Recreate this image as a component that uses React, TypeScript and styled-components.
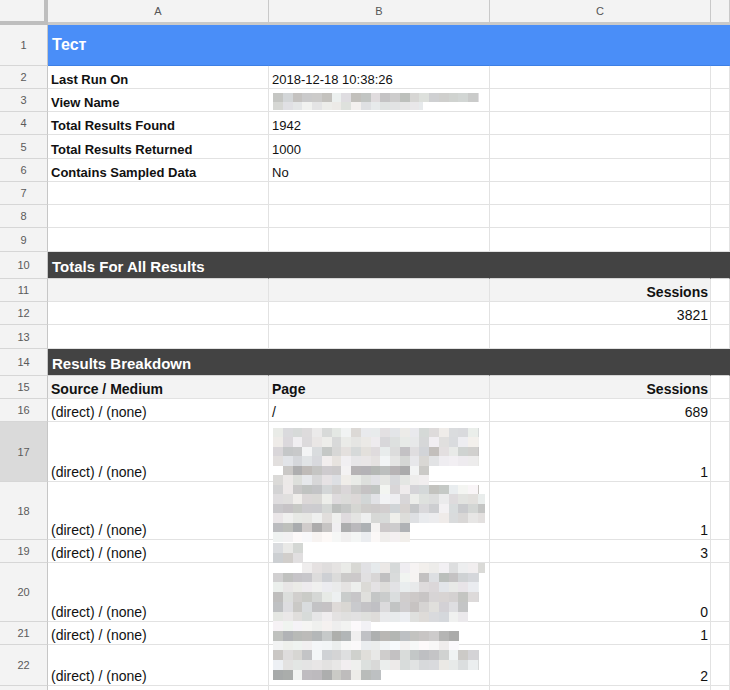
import React from 'react';
import styled, { createGlobalStyle, css } from 'styled-components';

const GlobalStyle = createGlobalStyle`
  html, body {
    margin: 0;
    padding: 0;
    background: #ffffff;
    overflow: hidden;
  }
  body {
    font-family: Arial, "Liberation Sans", sans-serif;
  }
`;

type Kind = 'plain' | 'title' | 'section' | 'thead';
type Tone = 'vlight' | 'light' | 'mid' | 'dark';
type Band = [number, number, Tone];

interface MosaicSpec {
  top: number;
  bandH: number;
  seed: number;
  bands: Band[];
}

interface CellSpec {
  text?: string;
  right?: boolean;
  bold?: boolean;
  size?: number;
  mosaic?: MosaicSpec;
}

interface RowSpec {
  n: number;
  label?: boolean;
  h: number;
  kind: Kind;
  active?: boolean;
  cells: CellSpec[];
}

const COL_W = 221;

const Sheet = styled.div`
  width: 730px;
  overflow: hidden;
  display: flex;
  flex-direction: column;
`;

const Row = styled.div<{ $h: number }>`
  display: flex;
  height: ${(p) => p.$h}px;
`;

const Corner = styled.div`
  flex: 0 0 48px;
  box-sizing: border-box;
  background: #f3f3f3;
  border-right: 4px solid #bebebe;
  border-bottom: 4px solid #bebebe;
`;

const ColHead = styled.div<{ $fill?: boolean }>`
  flex: ${(p) => (p.$fill ? '1 0 auto' : `0 0 ${COL_W}px`)};
  box-sizing: border-box;
  background: #f3f3f3;
  border-right: 1px solid #c9c9c9;
  border-bottom: 3px solid #c9c9c9;
  display: flex;
  align-items: center;
  justify-content: center;
  padding-bottom: 1px;
  font-size: 11px;
  color: #555555;
`;

const RowNum = styled.div<{ $active?: boolean }>`
  flex: 0 0 48px;
  box-sizing: border-box;
  background: ${(p) => (p.$active ? '#dadada' : '#f3f3f3')};
  border-right: 1px solid #c6c6c6;
  border-bottom: 1px solid #d6d6d6;
  display: flex;
  align-items: center;
  justify-content: center;
  font-size: 11px;
  color: #5a5a5a;
`;

const kindStyles: Record<Kind, ReturnType<typeof css>> = {
  plain: css`
    background: #ffffff;
    color: #111111;
    border-right: 1px solid #e2e2e2;
    border-bottom: 1px solid #e2e2e2;
  `,
  thead: css`
    background: #f3f3f3;
    color: #111111;
    border-right: 1px solid #e2e2e2;
    border-bottom: 1px solid #e2e2e2;
  `,
  title: css`
    background: #4a8ef8;
    color: #ffffff;
    border-right: 1px solid #4a8ef8;
    border-bottom: 1px solid #3d7fe4;
    align-items: center;
    padding-left: 4px;
  `,
  section: css`
    background: #434343;
    color: #ffffff;
    border-right: 1px solid #434343;
    border-bottom: 1px solid #d4d4d4;
    padding-left: 4px;
    padding-bottom: 3px;
  `,
};

const Cell = styled.div<{
  $kind: Kind;
  $right?: boolean;
  $bold?: boolean;
  $size: number;
  $fill?: boolean;
}>`
  position: relative;
  flex: ${(p) => (p.$fill ? '1 0 auto' : `0 0 ${COL_W}px`)};
  box-sizing: border-box;
  display: flex;
  align-items: flex-end;
  justify-content: ${(p) => (p.$right ? 'flex-end' : 'flex-start')};
  padding: 0 2px 1px 3px;
  white-space: nowrap;
  font-size: ${(p) => p.$size}px;
  font-weight: ${(p) => (p.$bold ? 700 : 400)};
  line-height: normal;
  ${(p) => kindStyles[p.$kind]}
`;

const MosaicSvg = styled.svg<{ $top: number }>`
  position: absolute;
  left: 4px;
  top: ${(p) => p.$top}px;
  z-index: 2;
  pointer-events: none;
  shape-rendering: crispEdges;
`;

const TONES: Record<Tone, [number, number]> = {
  vlight: [236, 250],
  light: [214, 240],
  mid: [190, 224],
  dark: [168, 204],
};

function makeRng(seed: number) {
  let s = seed >>> 0;
  return () => {
    s = (Math.imul(s, 1664525) + 1013904223) >>> 0;
    return s / 4294967296;
  };
}

const BLOCK_W = 9.75;

const Mosaic: React.FC<MosaicSpec> = ({ top, bandH, seed, bands }) => {
  const rand = makeRng(seed);
  const rects: React.ReactNode[] = [];
  bands.forEach(([x0, x1, tone], i) => {
    const start = Math.floor(x0 / BLOCK_W) * BLOCK_W;
    for (let x = start; x < x1 - 1; x += BLOCK_W) {
      const [lo, hi] = TONES[tone];
      let v = lo + rand() * (hi - lo);
      if (tone !== 'vlight' && rand() < 0.14) v = 232 + rand() * 14;
      const tr = Math.round((rand() - 0.5) * 8);
      const tb = Math.round((rand() - 0.5) * 8);
      const g = Math.round(v);
      rects.push(
        <rect
          key={`${i}-${x}`}
          x={x}
          y={i * bandH}
          width={Math.min(BLOCK_W, x1 - x) + 0.4}
          height={bandH + 0.4}
          fill={`rgb(${Math.min(255, g + tr)},${g},${Math.min(255, g + tb)})`}
        />
      );
    }
  });
  return (
    <MosaicSvg $top={top} width={213} height={Math.ceil(bands.length * bandH) + 1}>
      {rects}
    </MosaicSvg>
  );
};

const D = '(direct) / (none)';

const rows: RowSpec[] = [
  { n: 1, h: 41, kind: 'title', cells: [{ text: 'Тест', size: 16, bold: true }] },
  { n: 2, h: 23, kind: 'plain', cells: [{ text: 'Last Run On', bold: true, size: 13 }, { text: '2018-12-18 10:38:26', size: 13 }] },
  {
    n: 3,
    h: 23,
    kind: 'plain',
    cells: [
      { text: 'View Name', bold: true, size: 13 },
      {
        size: 13,
        mosaic: {
          top: 4,
          bandH: 8.5,
          seed: 11,
          bands: [
            [0, 206, 'mid'],
            [0, 150, 'light'],
          ],
        },
      },
    ],
  },
  { n: 4, h: 23, kind: 'plain', cells: [{ text: 'Total Results Found', bold: true, size: 13 }, { text: '1942', size: 13 }] },
  { n: 5, h: 24, kind: 'plain', cells: [{ text: 'Total Results Returned', bold: true, size: 13 }, { text: '1000', size: 13 }] },
  { n: 6, h: 23, kind: 'plain', cells: [{ text: 'Contains Sampled Data', bold: true, size: 13 }, { text: 'No', size: 13 }] },
  { n: 7, h: 23, kind: 'plain', cells: [] },
  { n: 8, h: 23, kind: 'plain', cells: [] },
  { n: 9, h: 24, kind: 'plain', cells: [] },
  { n: 10, h: 27, kind: 'section', cells: [{ text: 'Totals For All Results', size: 15, bold: true }] },
  { n: 11, h: 23, kind: 'thead', cells: [{}, {}, { text: 'Sessions', right: true, bold: true }] },
  { n: 12, h: 23, kind: 'plain', cells: [{}, {}, { text: '3821', right: true }] },
  { n: 13, h: 24, kind: 'plain', cells: [] },
  { n: 14, h: 27, kind: 'section', cells: [{ text: 'Results Breakdown', size: 15, bold: true }] },
  {
    n: 15,
    h: 23,
    kind: 'thead',
    cells: [
      { text: 'Source / Medium', bold: true },
      { text: 'Page', bold: true },
      { text: 'Sessions', right: true, bold: true },
    ],
  },
  { n: 16, h: 23, kind: 'plain', cells: [{ text: D }, { text: '/' }, { text: '689', right: true }] },
  {
    n: 17,
    h: 60,
    kind: 'plain',
    active: true,
    cells: [
      { text: D },
      {
        mosaic: {
          top: 6,
          bandH: 9.45,
          seed: 97,
          bands: [
            [0, 206, 'light'],
            [0, 206, 'light'],
            [0, 206, 'mid'],
            [0, 206, 'light'],
            [10, 157, 'dark'],
            [0, 157, 'light'],
            [0, 206, 'mid'],
            [0, 212, 'light'],
            [0, 212, 'mid'],
            [0, 212, 'light'],
            [0, 137, 'dark'],
            [0, 137, 'vlight'],
          ],
        },
      },
      { text: '1', right: true },
    ],
  },
  { n: 18, h: 58, kind: 'plain', cells: [{ text: D }, {}, { text: '1', right: true }] },
  {
    n: 19,
    h: 23,
    kind: 'plain',
    cells: [
      { text: D },
      {
        mosaic: {
          top: 3,
          bandH: 10,
          seed: 5,
          bands: [
            [0, 30, 'light'],
            [0, 30, 'mid'],
          ],
        },
      },
      { text: '3', right: true },
    ],
  },
  {
    n: 20,
    h: 59,
    kind: 'plain',
    cells: [
      { text: D },
      {
        mosaic: {
          top: 0,
          bandH: 9.72,
          seed: 4242,
          bands: [
            [30, 212, 'light'],
            [0, 206, 'mid'],
            [0, 206, 'light'],
            [0, 206, 'mid'],
            [0, 196, 'mid'],
            [0, 196, 'light'],
            [0, 98, 'vlight'],
            [0, 186, 'dark'],
            [0, 186, 'vlight'],
            [0, 206, 'mid'],
            [0, 206, 'light'],
            [0, 108, 'dark'],
          ],
        },
      },
      { text: '0', right: true },
    ],
  },
  { n: 21, h: 23, kind: 'plain', cells: [{ text: D }, {}, { text: '1', right: true }] },
  { n: 22, h: 41, kind: 'plain', cells: [{ text: D }, {}, { text: '2', right: true }] },
  { n: 23, h: 23, kind: 'plain', label: false, cells: [] },
];

const defaultSize = (k: Kind) => (k === 'title' ? 16 : k === 'section' ? 15 : 14);

export default function App() {
  return (
    <>
      <GlobalStyle />
      <Sheet>
        <Row $h={25}>
          <Corner />
          <ColHead>A</ColHead>
          <ColHead>B</ColHead>
          <ColHead>C</ColHead>
          <ColHead $fill />
        </Row>
        {rows.map((r) => (
          <Row key={r.n} $h={r.h}>
            <RowNum $active={r.active}>{r.label === false ? null : r.n}</RowNum>
            {[0, 1, 2].map((i) => {
              const c = r.cells[i] || {};
              return (
                <Cell
                  key={i}
                  $kind={r.kind}
                  $right={c.right}
                  $bold={c.bold}
                  $size={c.size ?? defaultSize(r.kind)}
                >
                  {c.text}
                  {c.mosaic && <Mosaic {...c.mosaic} />}
                </Cell>
              );
            })}
            <Cell $kind={r.kind === 'thead' ? 'plain' : r.kind} $size={14} $fill />
          </Row>
        ))}
      </Sheet>
    </>
  );
}
